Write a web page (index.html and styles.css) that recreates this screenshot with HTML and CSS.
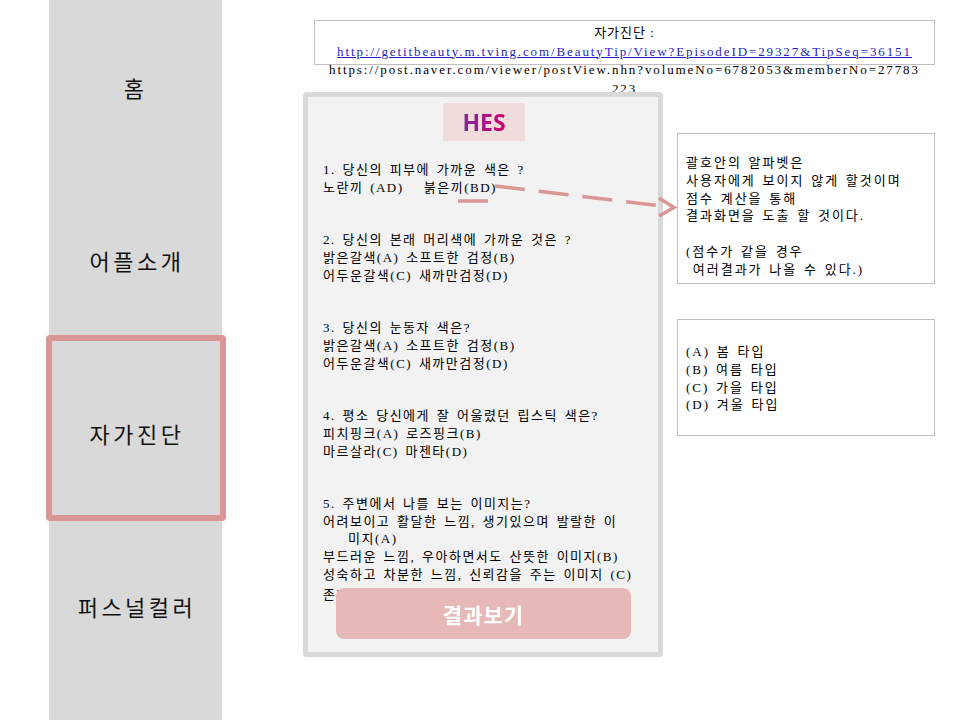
FILE: index.html
```html
<!DOCTYPE html>
<html lang="ko">
<head>
<meta charset="utf-8">
<title>자가진단</title>
<link rel="stylesheet" href="styles.css">
</head>
<body>
<div class="page">
  <nav class="sidebar">
    <div class="nav-item">홈</div>
    <div class="nav-item">어플소개</div>
    <div class="nav-item active">자가진단</div>
    <div class="nav-item">퍼스널컬러</div>
  </nav>
  <main class="content">
    <div class="url-box">
      <div class="url-title">자가진단 :</div>
      <div><a class="link" href="#">http://getitbeauty.m.tving.com/BeautyTip/View?EpisodeID=29327&amp;TipSeq=36151</a></div>
      <div class="url2">https://post.naver.com/viewer/postView.nhn?volumeNo=6782053&amp;memberNo=27783<br>223</div>
    </div>
    <div class="row">
      <section class="panel">
        <div class="logo"><span class="logo-text">HES</span></div>
        <div class="questions">
          <p class="q">1. 당신의 피부에 가까운 색은 ?<br>노란끼 (AD)&nbsp;&nbsp;&nbsp;붉은끼(BD)</p>
          <p class="q">2. 당신의 본래 머리색에 가까운 것은 ?<br>밝은갈색(A) 소프트한 검정(B)<br>어두운갈색(C) 새까만검정(D)</p>
          <p class="q">3. 당신의 눈동자 색은?<br>밝은갈색(A) 소프트한 검정(B)<br>어두운갈색(C) 새까만검정(D)</p>
          <p class="q">4. 평소 당신에게 잘 어울렸던 립스틱 색은?<br>피치핑크(A) 로즈핑크(B)<br>마르살라(C) 마젠타(D)</p>
          <p class="q">5. 주변에서 나를 보는 이미지는?<br>어려보이고 활달한 느낌, 생기있으며 발랄한 이<br><span class="indent">미지(A)</span><br>부드러운 느낌, 우아하면서도 산뜻한 이미지(B)<br>성숙하고 차분한 느낌, 신뢰감을 주는 이미지 (C)<span class="last-line">존재감 있고 세련된 느낌, 강렬한 이미지(D)</span></p>
        </div>
        <button class="result-btn" type="button">결과보기</button>
      </section>
      <aside class="notes">
        <div class="note note-1">괄호안의 알파벳은<br>사용자에게 보이지 않게 할것이며<br>점수 계산을 통해<br>결과화면을 도출 할 것이다.<br><br>(점수가 같을 경우<br>&nbsp;여러결과가 나올 수 있다.)</div>
        <div class="note note-2">(A) 봄 타입<br>(B) 여름 타입<br>(C) 가을 타입<br>(D) 겨울 타입</div>
      </aside>
    </div>
  </main>
  <svg class="arrow" width="960" height="720" viewBox="0 0 960 720" aria-hidden="true">
    <line x1="458" y1="201" x2="488" y2="201" class="stroke"/>
    <line x1="495" y1="186" x2="670" y2="207" class="stroke dashed"/>
    <polyline points="659,198 674,207.5 659,216" class="stroke head"/>
  </svg>
</div>
</body>
</html>
```

FILE: styles.css
```css
* { box-sizing: border-box; }

html, body {
  margin: 0;
  padding: 0;
  background: #ffffff;
}

.page {
  position: relative;
  width: 960px;
  height: 720px;
  overflow: hidden;
  display: flex;
  font-family: "Liberation Serif", "Noto Sans CJK KR", serif;
  font-size: 13px;
  color: #000;
}

/* Sidebar */
.sidebar {
  margin-left: 49px;
  width: 173px;
  flex: none;
  background: #d9d9d9;
  padding-top: 0;
  display: flex;
  flex-direction: column;
}

.nav-item {
  position: relative;
  height: 173px;
  display: flex;
  align-items: center;
  justify-content: center;
  font-family: "Noto Sans CJK KR", "Noto Sans", sans-serif;
  font-size: 22px;
  letter-spacing: 3.5px;
  padding-left: 3px;
  color: #111;
}

.nav-item:first-child {
  padding-left: 0;
}

.nav-item.active::after {
  content: "";
  position: absolute;
  top: -11px;
  bottom: -2px;
  left: -3px;
  right: -4px;
  border: 6px solid #d99694;
  border-radius: 4px;
}

/* Content */
.content {
  margin-left: 81px;
  padding-top: 20px;
  display: flex;
  flex-direction: column;
}

.url-box {
  margin-left: 11px;
  width: 621px;
  height: 45px;
  border: 1px solid #bfbfbf;
  padding-top: 3px;
  text-align: center;
  line-height: 18.5px;
  font-size: 13px;
  letter-spacing: 1.9px;
}

.url-title {
  letter-spacing: 1px;
}

.link {
  color: #1f1fc0;
  text-decoration: underline;
}

.row {
  display: flex;
  margin-top: 27px;
}

.panel {
  position: relative;
  width: 360px;
  height: 565px;
  flex: none;
  background: #f2f2f2;
  border: 5px solid #d9d9d9;
  border-radius: 4px;
  padding: 6px 0 0 15px;
}

.logo {
  width: 82px;
  height: 38px;
  margin-left: 120px;
  background: #f2dcdb;
  display: flex;
  align-items: center;
  justify-content: center;
}

.logo-text {
  font-family: "Noto Sans", "Open Sans", sans-serif;
  font-weight: 700;
  font-size: 23px;
  background: linear-gradient(90deg, #7a2aa0, #d0006a);
  -webkit-background-clip: text;
  background-clip: text;
  color: transparent;
}

.questions {
  margin-top: 20px;
  line-height: 17.6px;
  letter-spacing: 1.5px;
  word-spacing: 2px;
}

.q {
  margin: 0 0 35.2px 0;
  white-space: nowrap;
}

.indent {
  padding-left: 25px;
}

.last-line {
  display: block;
  margin-top: 3px;
}

.result-btn {
  position: absolute;
  left: 28px;
  top: 491px;
  width: 295px;
  height: 51px;
  border: none;
  border-radius: 8px;
  background: #e6b8b7;
  color: #ffffff;
  font-family: "Noto Sans CJK KR", "Noto Sans", sans-serif;
  font-weight: 700;
  font-size: 21px;
  letter-spacing: 1px;
  cursor: pointer;
}

/* Notes */
.notes {
  margin-left: 14px;
  margin-top: 41px;
  width: 258px;
  display: flex;
  flex-direction: column;
}

.note {
  border: 1px solid #bfbfbf;
  padding-left: 8px;
  line-height: 17.8px;
  letter-spacing: 2px;
  word-spacing: 1.5px;
  white-space: nowrap;
}

.note-1 {
  height: 151px;
  padding-top: 20px;
}

.note-2 {
  margin-top: 35px;
  height: 117px;
  padding-top: 23px;
}

/* Arrow overlay */
.arrow {
  position: absolute;
  left: 0;
  top: 0;
  pointer-events: none;
}

.stroke {
  stroke: #d99694;
  stroke-width: 3.5;
  fill: none;
}

.dashed {
  stroke-dasharray: 30 14;
}
```
